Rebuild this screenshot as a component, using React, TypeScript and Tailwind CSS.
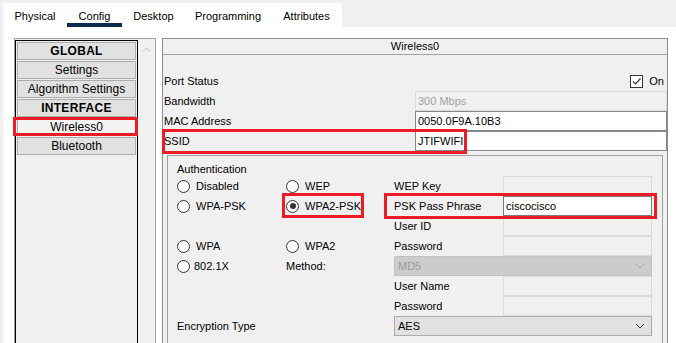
import React from 'react';

const TABS = [
  { label: 'Physical', w: 'w-[64px]' },
  { label: 'Config', w: 'w-[55px]', active: true },
  { label: 'Desktop', w: 'w-[63px]' },
  { label: 'Programming', w: 'w-[86px]' },
  { label: 'Attributes', w: 'w-[71px]' },
];

const LIST = [
  { label: 'GLOBAL', bold: true },
  { label: 'Settings' },
  { label: 'Algorithm Settings' },
  { label: 'INTERFACE', bold: true },
  { label: 'Wireless0', selected: true },
  { label: 'Bluetooth' },
];

const RED = 'absolute border-[3px] border-[#ed1c24] pointer-events-none';
const DIS_INPUT = 'h-[20px] border border-[#dadada] bg-[#f0f0f0]';

function Radio({ label, checked, gap = 'ml-[6px]', className = '' }: { label: string; checked?: boolean; gap?: string; className?: string }) {
  return (
    <div className={'flex items-center h-[20px] ' + className}>
      <div className="w-[13px] h-[13px] rounded-full border border-[#333333] bg-white flex items-center justify-center">
        {checked && <div className="w-[6px] h-[6px] rounded-full bg-[#333333]" />}
      </div>
      <span className={gap}>{label}</span>
    </div>
  );
}

function Chevron({ color }: { color: string }) {
  return (
    <svg width="10" height="6" viewBox="0 0 10 6" fill="none">
      <path d="M1 1 L5 5 L9 1" stroke={color} strokeWidth="1" />
    </svg>
  );
}

export default function App() {
  return (
    <div className="w-[676px] h-[343px] bg-[#f0f0f0] pl-[3px] pt-[3px] flex flex-col overflow-hidden font-['Liberation_Sans',Arial,sans-serif] text-[11px] text-black">
      <div className="flex h-[24px] shrink-0">
        <div className="flex bg-white h-full">
          {TABS.map(t => (
            <div key={t.label} className={`${t.w} h-full flex justify-center pt-[6px] leading-[14px] ${t.active ? 'border-b-[4px] border-[#0e2a4d]' : ''}`}>{t.label}</div>
          ))}
        </div>
      </div>

      <div className="flex-1 bg-white flex pl-[11px] pt-[11px] min-h-0 relative">
        {/* left list */}
        <div className="w-[142px] border border-b-0 border-[#a0a0a0] bg-[#f0f0f0] flex">
          <div className="w-[123px] mt-[1px] border border-b-0 border-black flex flex-col gap-[1px] pt-[1px] px-[1px]">
            {LIST.map(i => (
              <div key={i.label} className={`h-[18px] border border-[#adadad] flex items-center justify-center text-[12px] ${i.selected ? 'bg-[#f4f4f4]' : 'bg-[#e1e1e1]'} ${i.bold ? 'font-bold tracking-[0.3px]' : ''}`}>{i.label}</div>
            ))}
          </div>
          <div className="flex-1 flex justify-center pt-[8px]">
            <svg width="9" height="5" viewBox="0 0 9 5" fill="none"><path d="M1 4.5 L4.5 1 L8 4.5" stroke="#bdbdbd" strokeWidth="1" /></svg>
          </div>
        </div>

        {/* right panel */}
        <div className="ml-[6px] w-[506px] border border-b-0 border-[#8e8e8e] flex flex-col">
          <div className="h-[16px] border-b border-[#a0a0a0] bg-[#f0f0f0] text-center leading-[15px]">Wireless0</div>
          <div className="flex-1 bg-[#f0f0f0] pt-[16px] flex flex-col">
            <div className="h-[20px] flex items-center justify-between pl-[1px] pr-[3px]">
              <span>Port Status</span>
              <div className="flex items-center">
                <div className="w-[13px] h-[13px] border border-[#333333] bg-white">
                  <svg width="11" height="11" viewBox="0 0 11 11" fill="none"><path d="M2 5.5 L4.5 8 L9.5 2.5" stroke="#333333" strokeWidth="1.2" /></svg>
                </div>
                <span className="ml-[6px]">On</span>
              </div>
            </div>
            {[
              { label: 'Bandwidth', value: '300 Mbps', disabled: true },
              { label: 'MAC Address', value: '0050.0F9A.10B3' },
              { label: 'SSID', value: 'JTIFWIFI' },
            ].map(r => (
              <div key={r.label} className="h-[20px] flex items-center">
                <span className="w-[252px] pl-[1px]">{r.label}</span>
                <div className={`w-[252px] h-[20px] border pl-[2px] flex items-center ${r.disabled ? 'border-[#dadada] bg-[#f0f0f0] text-[#a0a0a0]' : 'border-[#828790] bg-white'}`}>{r.value}</div>
              </div>
            ))}

            <div className="mt-[4px] mx-[4px] flex-1 border border-b-0 border-[#a0a0a0] pl-[9px] pt-[6px]">
              <div className="h-[14px] leading-[14px]">Authentication</div>
              <div className="grid grid-cols-[109px_108px_109px_149px] grid-rows-[repeat(8,20px)]">
                <Radio label="Disabled" className="col-start-1 row-start-1" />
                <Radio label="WEP" className="col-start-2 row-start-1" />
                <Radio label="WPA-PSK" className="col-start-1 row-start-2" />
                <Radio label="WPA2-PSK" checked className="col-start-2 row-start-2" />
                <Radio label="WPA" className="col-start-1 row-start-4" />
                <Radio label="WPA2" className="col-start-2 row-start-4" />
                <Radio label="802.1X" gap="ml-[4px]" className="col-start-1 row-start-5" />
                <div className="col-start-2 row-start-5 flex items-center">Method:</div>
                <div className="col-start-1 col-span-2 row-start-8 flex items-center">Encryption Type</div>

                <div className="col-start-3 row-start-1 flex items-center">WEP Key</div>
                <div className={'col-start-4 row-start-1 ' + DIS_INPUT} />
                <div className="col-start-3 row-start-2 flex items-center">PSK Pass Phrase</div>
                <div className="col-start-4 row-start-2 h-[20px] border border-[#7a7a7a] bg-white pl-[2px] flex items-center">ciscocisco</div>
                <div className="col-start-3 row-start-3 flex items-center">User ID</div>
                <div className={'col-start-4 row-start-3 ' + DIS_INPUT} />
                <div className="col-start-3 row-start-4 flex items-center">Password</div>
                <div className={'col-start-4 row-start-4 ' + DIS_INPUT} />
                <div className="col-start-3 col-span-2 row-start-5 h-[20px] border border-[#c2c2c2] bg-[#cccccc] text-[#9a9a9a] pl-[3px] pr-[6px] flex items-center justify-between">
                  <span>MD5</span><Chevron color="#aaaaaa" />
                </div>
                <div className="col-start-3 row-start-6 flex items-center">User Name</div>
                <div className={'col-start-4 row-start-6 ' + DIS_INPUT} />
                <div className="col-start-3 row-start-7 flex items-center">Password</div>
                <div className={'col-start-4 row-start-7 ' + DIS_INPUT} />
                <div className="col-start-3 col-span-2 row-start-8 h-[20px] border border-[#adadad] bg-[#e1e1e1] pl-[3px] pr-[6px] flex items-center justify-between">
                  <span>AES</span><Chevron color="#333333" />
                </div>
              </div>
            </div>
          </div>
        </div>

        {/* annotation boxes */}
        <div className={RED + ' left-[10px] top-[90px] w-[125px] h-[19px]'} />
        <div className={RED + ' left-[159px] top-[102px] w-[305px] h-[25px]'} />
        <div className={RED + ' left-[279px] top-[166px] w-[82px] h-[25px]'} />
        <div className={RED + ' left-[381px] top-[166px] w-[273px] h-[26px]'} />
      </div>
    </div>
  );
}
